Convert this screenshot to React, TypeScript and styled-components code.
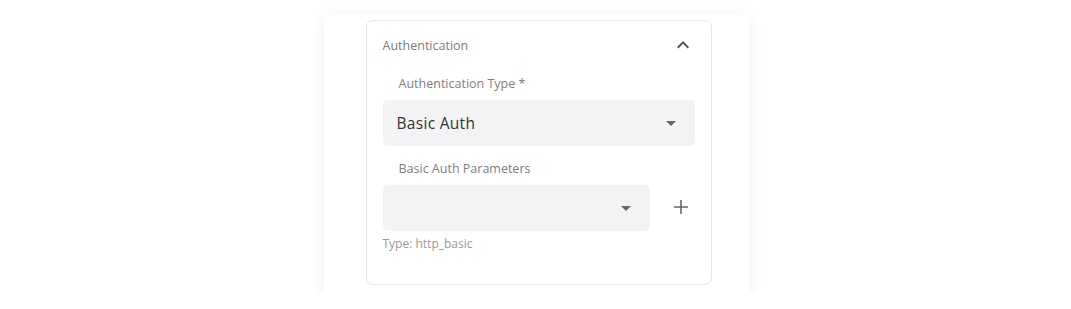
import styled, { createGlobalStyle } from "styled-components"

const GlobalStyle = createGlobalStyle`
  body {
    margin: 0;
    background: #ffffff;
    font-family: "Open Sans", "Noto Sans", sans-serif;
  }
`

const Page = styled.div`
  display: flex;
  justify-content: center;
  padding: 15px 0 0 1px;
`

const Card = styled.div`
  width: 425px;
  box-sizing: border-box;
  padding: 5px 37px 9px 42px;
  background: #fff;
  box-shadow: 0 2px 14px rgba(0, 0, 0, 0.07);
`

const Accordion = styled.div`
  border: 1px solid #e6e6e8;
  border-radius: 7px;
  padding-bottom: 32px;
`

const Header = styled.div`
  height: 48px;
  display: flex;
  align-items: center;
  justify-content: space-between;
  padding: 0 16px;
  font-size: 12.5px;
  color: #7b7b7b;
`

const Body = styled.div`
  padding: 0 16px;
`

const Label = styled.div<{ $top: number }>`
  margin-top: ${(p) => p.$top}px;
  padding-left: 16px;
  height: 20px;
  line-height: 20px;
  font-size: 12.5px;
  color: #7e7e7e;
  margin-bottom: 6px;
`

const Row = styled.div`
  display: flex;
  align-items: center;
`

const Select = styled.div`
  flex: 1;
  height: 46px;
  box-sizing: border-box;
  display: flex;
  align-items: center;
  justify-content: space-between;
  padding: 0 19px 0 14px;
  background: #f3f3f5;
  border-radius: 5px;
  font-size: 15.5px;
  color: #333;
  letter-spacing: 0.3px;
`

const Caret = styled.span`
  width: 0;
  height: 0;
  border-left: 5px solid transparent;
  border-right: 5px solid transparent;
  border-top: 5px solid #666;
`

const AddButton = styled.button`
  width: 45px;
  height: 46px;
  border: none;
  background: none;
  padding: 0 7px 2px 0;
  display: flex;
  align-items: center;
  justify-content: flex-end;
  cursor: pointer;
`

const Helper = styled.div`
  margin-top: 4px;
  font-size: 12px;
  color: #9a9a9a;
`

export default function App() {
  return (
    <>
      <GlobalStyle />
      <Page>
        <Card>
          <Accordion>
            <Header>
              <span>Authentication</span>
              <svg width="24" height="24" viewBox="0 0 24 24">
                <path d="M7.41 15.41 12 10.83l4.59 4.58L18 14l-6-6-6 6z" fill="#555" />
              </svg>
            </Header>
            <Body>
              <Label $top={5}>Authentication Type *</Label>
              <Select>
                <span>Basic Auth</span>
                <Caret />
              </Select>
              <Label $top={13}>Basic Auth Parameters</Label>
              <Row>
                <Select>
                  <span />
                  <Caret />
                </Select>
                <AddButton>
                  <svg width="14" height="14" viewBox="0 0 14 14">
                    <path d="M7 0v14M0 7h14" stroke="#666" strokeWidth="1.6" />
                  </svg>
                </AddButton>
              </Row>
              <Helper>Type: http_basic</Helper>
            </Body>
          </Accordion>
        </Card>
      </Page>
    </>
  )
}
